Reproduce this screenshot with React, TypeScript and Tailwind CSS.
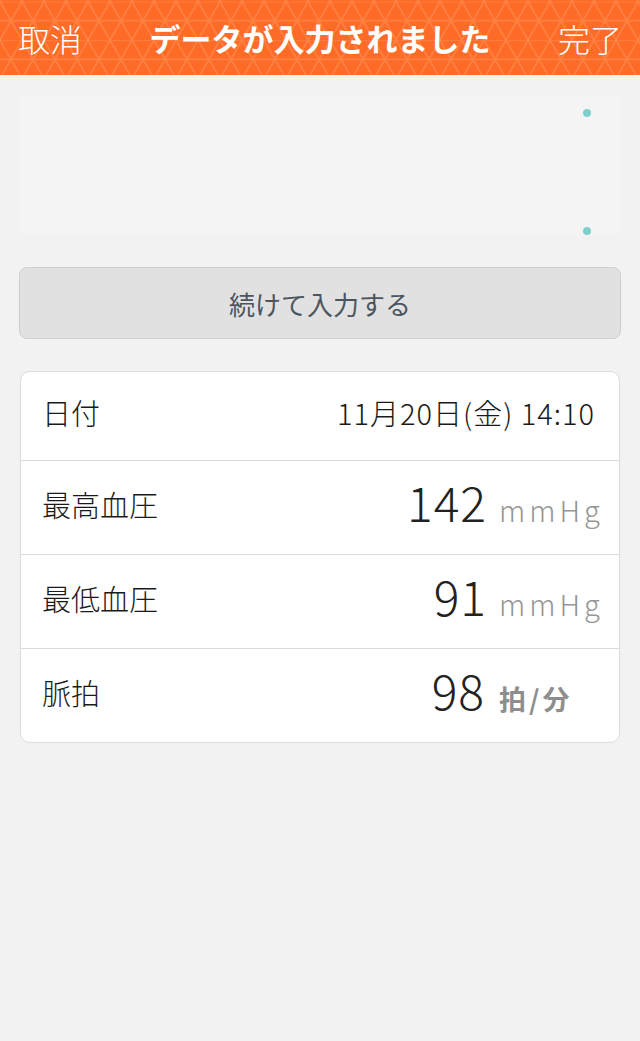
const jp = { fontFamily: '"Noto Sans CJK JP", "Noto Sans", sans-serif' }

function HeaderPattern() {
  return (
    <svg className="absolute inset-0 h-full w-full" aria-hidden="true">
      <defs>
        <pattern id="tri" width="22" height="38.6" patternUnits="userSpaceOnUse" y="1.5">
          <g stroke="#ff8142" strokeWidth="1.6" fill="none">
            <line x1="0" y1="0" x2="22" y2="0" />
            <line x1="0" y1="19.3" x2="22" y2="19.3" />
            <line x1="0" y1="0" x2="11" y2="19.3" />
            <line x1="22" y1="0" x2="11" y2="19.3" />
            <line x1="11" y1="19.3" x2="0" y2="38.6" />
            <line x1="11" y1="19.3" x2="22" y2="38.6" />
          </g>
        </pattern>
      </defs>
      <rect width="100%" height="100%" fill="url(#tri)" />
    </svg>
  )
}

function Row({ label, children, className }: { label: string; children: React.ReactNode; className: string }) {
  return (
    <div className={`flex items-center justify-between pl-[21px] ${className}`}>
      <span className="pb-[6px] text-[29px] font-light text-[#1a1a1a]">{label}</span>
      {children}
    </div>
  )
}

function Measure({ value, unit }: { value: string; unit: string }) {
  return (
    <div className="flex items-baseline pb-[14px]">
      <span className="text-[48px] font-light leading-none tracking-[1px] text-[#222]">{value}</span>
      <span className="ml-[12px] w-[108px] text-[29px] font-light leading-none tracking-[4px] text-[#969696]">
        {unit}
      </span>
    </div>
  )
}

export default function App() {
  return (
    <div className="min-h-[1041px] w-[640px] bg-[#f2f2f2]" style={jp}>
      <header className="relative flex h-[75px] items-center justify-between overflow-hidden bg-[#fd6b27] px-[18px] text-white">
        <HeaderPattern />
        <span className="relative text-[32px] font-light leading-none">取消</span>
        <span className="relative text-[31px] font-bold leading-none">データが入力されました</span>
        <span className="relative text-[32px] font-light leading-none">完了</span>
      </header>

      <div className="relative mx-[20px] mt-[20px] h-[140px] bg-[#f4f4f4]">
        <span className="absolute left-[563px] top-[14px] h-[8px] w-[8px] rounded-full bg-[#7ecfcb]" />
        <span className="absolute left-[563px] top-[132px] h-[8px] w-[8px] rounded-full bg-[#7ecfcb]" />
      </div>

      <button className="mx-[19px] mt-[32px] flex h-[72px] w-[602px] items-center justify-center rounded-[8px] border border-[#cfcfcf] bg-[#e1e1e1] text-[26px] text-[#4b5560]">
        続けて入力する
      </button>

      <div className="mx-[20px] mt-[32px] overflow-hidden rounded-[10px] border border-[#dcdcdc] bg-white">
        <Row label="日付" className="h-[89px] border-b border-[#dcdcdc] pr-[24px]">
          <span className="pb-[6px] text-[29px] font-light tracking-[1px] text-[#1a1a1a]">11月20日(金) 14:10</span>
        </Row>
        <Row label="最高血圧" className="h-[94px] border-b border-[#dcdcdc] pr-[12px]">
          <Measure value="142" unit="mmHg" />
        </Row>
        <Row label="最低血圧" className="h-[94px] border-b border-[#dcdcdc] pr-[12px]">
          <Measure value="91" unit="mmHg" />
        </Row>
        <Row label="脈拍" className="h-[93px] pr-[12px]">
          <div className="flex items-baseline pb-[14px]">
            <span className="text-[48px] font-light leading-none tracking-[1px] text-[#222]">98</span>
            <span className="ml-[14px] w-[108px] text-[27px] font-bold leading-none tracking-[3px] text-[#8e8e8e]">
              拍/分
            </span>
          </div>
        </Row>
      </div>
    </div>
  )
}
